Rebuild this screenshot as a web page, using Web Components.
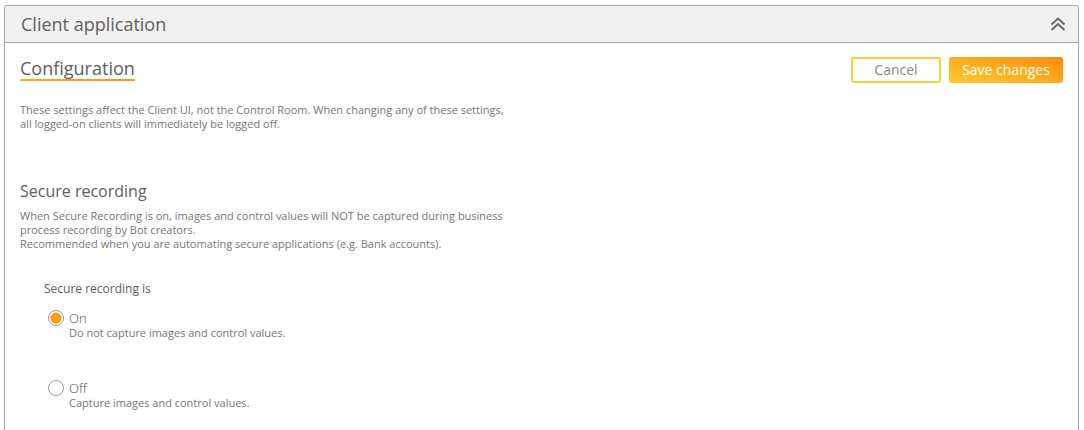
<!DOCTYPE html>
<html lang="en">
<head>
<meta charset="utf-8">
<title>Client application</title>
<style>
  * { box-sizing: border-box; }
  body {
    margin: 0;
    padding: 5px 5px 0 4px;
    min-height: 100vh;
    display: flex;
    flex-direction: column;
    background: #fff;
    color: #606060;
    font-family: "Open Sans", "Noto Sans", sans-serif;
    font-size: 11px;
    line-height: 14px;
  }
  settings-panel { flex: 1; }
</style>
</head>
<body>
<settings-panel>
  <span slot="title">Client application</span>
  <config-header>
    Configuration
    <action-button slot="actions">Cancel</action-button>
    <action-button slot="actions" primary>Save changes</action-button>
  </config-header>
  <settings-note>These settings affect the Client UI, not the Control Room. When changing any of these settings,<br>all logged-on clients will immediately be logged off.</settings-note>
  <settings-section>
    <span slot="heading">Secure recording</span>
    <settings-note>When Secure Recording is on, images and control values will NOT be captured during business<br>process recording by Bot creators.<br>Recommended when you are automating secure applications (e.g. Bank accounts).</settings-note>
    <recording-options slot="controls"></recording-options>
  </settings-section>
</settings-panel>

<script>
class BaseElement extends HTMLElement {
  constructor() {
    super();
    this.attachShadow({ mode: "open" }).innerHTML =
      `<style>*{box-sizing:border-box} :host{display:block} ${this.constructor.css}</style>${this.constructor.html}`;
  }
}

class SettingsPanel extends BaseElement {
  static css = `
    :host { border: 1px solid #a6a6a6; border-bottom: 0; border-radius: 3px 3px 0 0; overflow: hidden; }
    header { display: flex; align-items: center; justify-content: space-between;
      height: 37px; padding: 0 12px 0 16px; background: #f1f1f1; border-bottom: 1px solid #a6a6a6; }
    h1 { margin: 0; font-size: 18px; line-height: 24px; font-weight: 400; }
    button { display: flex; padding: 0; border: 0; background: none; color: #666; }
    main { padding: 14px 15px 16px; }
  `;
  static html = `
    <header>
      <h1><slot name="title"></slot></h1>
      <button type="button" aria-label="Collapse">
        <svg width="16" height="16" viewBox="0 0 16 16" fill="none" stroke="currentColor" stroke-width="2">
          <path d="M1.500 8.500 8 2.500 14.500 8.500M1.500 14 8 8 14.500 14"/>
        </svg>
      </button>
    </header>
    <main><slot></slot></main>`;
}
customElements.define("settings-panel", SettingsPanel);

class ConfigHeader extends BaseElement {
  static css = `
    :host { display: flex; justify-content: space-between; align-items: flex-start; margin-bottom: 20px; }
    h2 { margin: 0; font-size: 18px; line-height: 22px; font-weight: 400;
      padding-bottom: 2px; background: linear-gradient(90deg, #ffab14, #ff8f33) bottom / 100% 2px no-repeat; }
    .actions { display: flex; gap: 8px; }
  `;
  static html = `<h2><slot></slot></h2><div class="actions"><slot name="actions"></slot></div>`;
}
customElements.define("config-header", ConfigHeader);

class ActionButton extends BaseElement {
  static css = `
    button { display: block; height: 26px; min-width: 90px; padding: 0 11px; font: inherit; font-size: 14px;
      line-height: 22px; border: 2px solid #ffcb2f; border-radius: 3px; background: #fff; color: #888; }
    :host([primary]) button { min-width: 114px; border: 0; line-height: 26px; color: #fff; font-weight: 500;
      background: linear-gradient(to top right, #ffcb2f, #ffab1b 50%, #ff8a0e); }
  `;
  static html = `<button type="button"><slot></slot></button>`;
}
customElements.define("action-button", ActionButton);

class SettingsNote extends BaseElement {
  static css = `p { margin: 0; color: #777; }`;
  static html = `<p><slot></slot></p>`;
}
customElements.define("settings-note", SettingsNote);

class SettingsSection extends BaseElement {
  static css = `
    :host { padding-top: 50px; }
    h3 { margin: 0 0 8px; font-size: 16px; line-height: 20px; font-weight: 400; }
    .controls { padding: 29px 24px 0; }
  `;
  static html = `<h3><slot name="heading"></slot></h3><slot></slot><div class="controls"><slot name="controls"></slot></div>`;
}
customElements.define("settings-section", SettingsSection);

class RecordingOptions extends BaseElement {
  static css = `
    fieldset { margin: 0; padding: 0; border: 0; min-width: 0; }
    legend { padding: 0; margin-bottom: 12px; font-size: 12px; line-height: 18px; }
    label { display: grid; grid-template-columns: 16px 1fr; column-gap: 5px; align-items: center;
      padding-left: 4px; margin-bottom: 40px; }
    label:last-child { margin-bottom: 0; }
    input { appearance: none; margin: 0; width: 16px; height: 16px; border: 1px solid #999; border-radius: 50%; background: #fff; }
    input:checked { background: radial-gradient(circle, #ffa00a 5px, #fff 6px); }
    b { font-weight: 300; font-size: 13px; line-height: 16px; color: #505050; }
    small { grid-column: 2; font-size: 11px; line-height: 14px; color: #777; }
  `;
  static html = `
    <fieldset>
      <legend>Secure recording is</legend>
      <label><input type="radio" name="secure" checked><b>On</b><small>Do not capture images and control values.</small></label>
      <label><input type="radio" name="secure"><b>Off</b><small>Capture images and control values.</small></label>
    </fieldset>`;
}
customElements.define("recording-options", RecordingOptions);
</script>
</body>
</html>
